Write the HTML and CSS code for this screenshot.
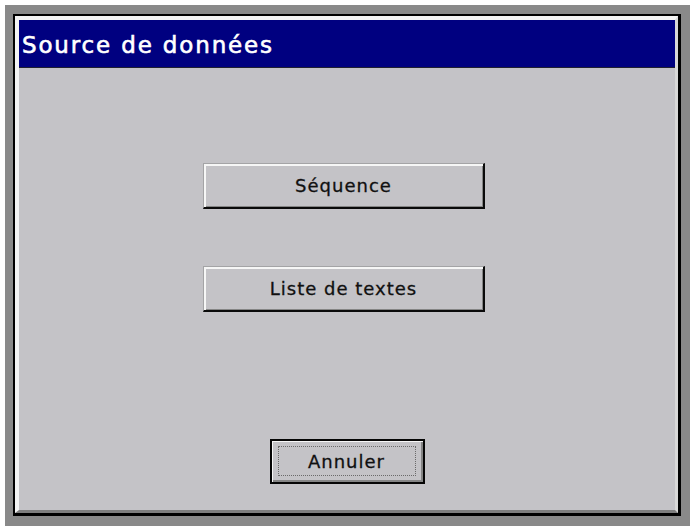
FILE: index.html
```html
<!DOCTYPE html>
<html lang="fr">
<head>
<meta charset="utf-8">
<title>Source de données</title>
<link rel="stylesheet" href="styles.css">
</head>
<body>
<div class="screen">
  <div class="window">
    <div class="frame">
      <div class="titlebar"><span class="title">Source de données</span></div>
      <div class="client">
        <div class="choices">
          <button class="btn">Séquence</button>
          <button class="btn">Liste de textes</button>
        </div>
        <div class="footer">
          <button class="btn btn-default"><span class="focus">Annuler</span></button>
        </div>
      </div>
    </div>
  </div>
</div>
</body>
</html>
```
FILE: styles.css
```css
html, body {
  margin: 0;
  padding: 0;
  background: #ffffff;
  width: 690px;
  height: 526px;
  overflow: hidden;
}

.screen {
  margin: 5px 0 0 5px;
  width: 685px;
  height: 521px;
  box-sizing: border-box;
  background: #898989;
  padding: 9px 9px 10px 8px;
}

.window {
  height: 100%;
  box-sizing: border-box;
  border-style: solid;
  border-color: #000000;
  border-width: 2px 3px 3px 2px;
}

.frame {
  height: 100%;
  box-sizing: border-box;
  border-style: solid;
  border-width: 4px 3px 3px 4px;
  border-color: #f4f4f4 #d8d8d8 #7e7e7e #f4f4f4;
  background: #c4c3c7;
  display: flex;
  flex-direction: column;
}

.titlebar {
  height: 47px;
  background: #000080;
  border-bottom: 1px solid #202030;
  display: flex;
  align-items: center;
  padding-left: 3px;
  flex-shrink: 0;
}

.title {
  color: #ffffff;
  font-family: "DejaVu Sans", Verdana, sans-serif;
  font-size: 23px;
  letter-spacing: 1.85px;
  -webkit-text-stroke: 0.6px #ffffff;
  position: relative;
  top: 1px;
}

.client {
  flex: 1;
  display: flex;
  flex-direction: column;
  align-items: center;
}

.choices {
  display: flex;
  flex-direction: column;
  align-items: center;
  gap: 57px;
  margin-top: 95px;
}

.btn {
  font-family: "DejaVu Sans", Verdana, sans-serif;
  font-size: 18px;
  letter-spacing: 1px;
  color: #101010;
  -webkit-text-stroke: 0.3px #101010;
  background: #c4c3c7;
  width: 282px;
  height: 46px;
  margin: 0 0 0 -6px;
  padding: 0;
  box-sizing: border-box;
  border-style: solid;
  border-width: 1px 2px 2px 1px;
  border-color: #a4a4a6 #0a0a0a #0a0a0a #a4a4a6;
  box-shadow: inset 2px 2px 0 #f6f6f6, inset -1px -1px 0 #858585;
  display: flex;
  align-items: center;
  justify-content: center;
}

.footer {
  margin-top: auto;
  margin-bottom: 26px;
}

.btn-default {
  width: 155px;
  height: 45px;
  margin: 0;
  border: 2px solid #050505;
  box-shadow: inset 1px 1px 0 #f6f6f6, inset -2px -2px 0 #858585;
  padding: 5px 7px 6px 6px;
}

.focus {
  flex: 1;
  align-self: stretch;
  display: flex;
  align-items: center;
  justify-content: center;
  border: 1px dotted #6a6a6a;
}
```
